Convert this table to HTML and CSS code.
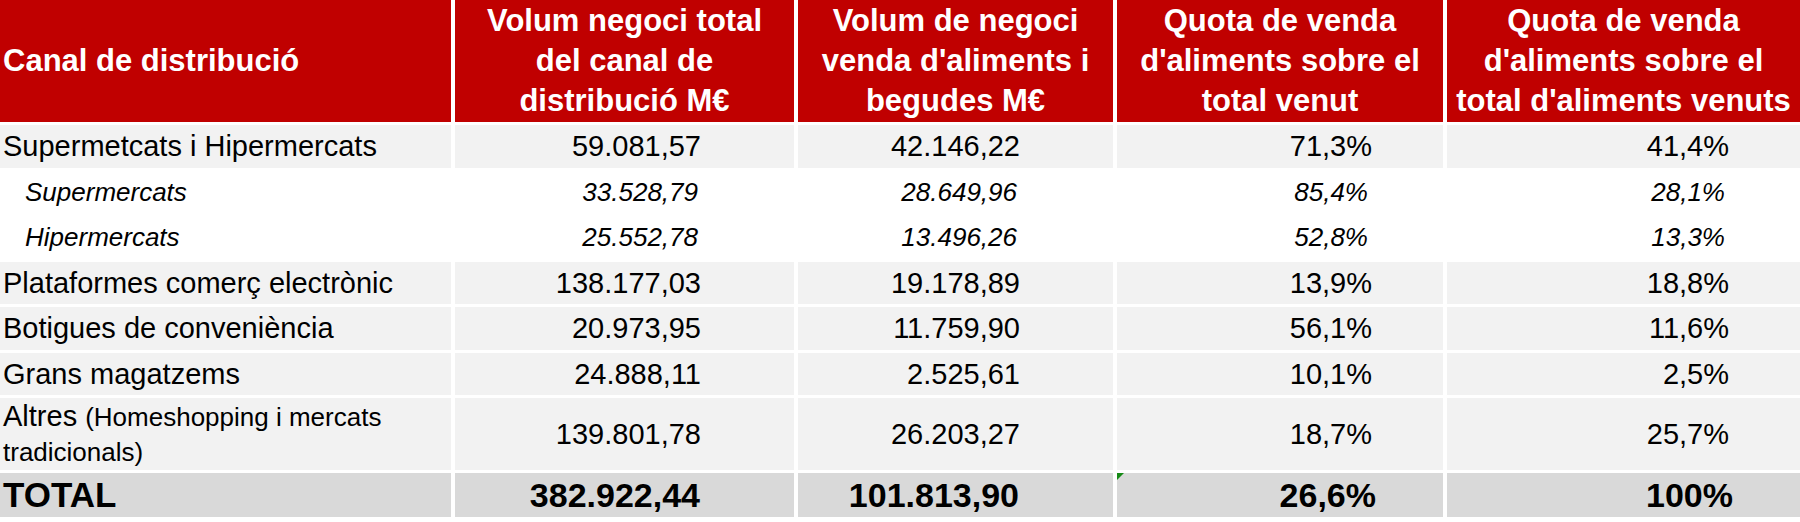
FILE: index.html
```html
<!DOCTYPE html>
<html lang="ca">
<head>
<meta charset="utf-8">
<title>Canal de distribució</title>
<link rel="stylesheet" href="styles.css">
</head>
<body>
<div class="sheet">
  <div class="row head">
    <div>Canal de distribució</div>
    <div>Volum negoci total<br>del canal de<br>distribució M€</div>
    <div>Volum de negoci<br>venda d'aliments i<br>begudes M€</div>
    <div>Quota de venda<br>d'aliments sobre el<br>total venut</div>
    <div>Quota de venda<br>d'aliments sobre el<br>total d'aliments venuts</div>
  </div>
  <div class="row band">
    <div>Supermetcats i Hipermercats</div>
    <div>59.081,57</div>
    <div>42.146,22</div>
    <div>71,3%</div>
    <div>41,4%</div>
  </div>
  <div class="row sub short">
    <div>Supermercats</div>
    <div>33.528,79</div>
    <div>28.649,96</div>
    <div>85,4%</div>
    <div>28,1%</div>
  </div>
  <div class="row sub">
    <div>Hipermercats</div>
    <div>25.552,78</div>
    <div>13.496,26</div>
    <div>52,8%</div>
    <div>13,3%</div>
  </div>
  <div class="row band short">
    <div>Plataformes comerç electrònic</div>
    <div>138.177,03</div>
    <div>19.178,89</div>
    <div>13,9%</div>
    <div>18,8%</div>
  </div>
  <div class="row band">
    <div>Botigues de conveniència</div>
    <div>20.973,95</div>
    <div>11.759,90</div>
    <div>56,1%</div>
    <div>11,6%</div>
  </div>
  <div class="row band short">
    <div>Grans magatzems</div>
    <div>24.888,11</div>
    <div>2.525,61</div>
    <div>10,1%</div>
    <div>2,5%</div>
  </div>
  <div class="row band tall">
    <div class="wrap">
      <p class="label">Altres <span class="note">(Homeshopping i mercats</span><br><span class="note">tradicionals)</span></p>
    </div>
    <div>139.801,78</div>
    <div>26.203,27</div>
    <div>18,7%</div>
    <div>25,7%</div>
  </div>
  <div class="row total">
    <div class="total-label">TOTAL</div>
    <div>382.922,44</div>
    <div>101.813,90</div>
    <div class="flag">26,6%</div>
    <div>100%</div>
  </div>
</div>
</body>
</html>
```

FILE: styles.css
```css
html, body {
  margin: 0;
  padding: 0;
  background: #ffffff;
}

body {
  font-family: "Liberation Sans", Arial, sans-serif;
  color: #000000;
}

.sheet {
  display: flex;
  flex-direction: column;
  gap: 3px;
  width: 1800px;
}

.row {
  display: grid;
  grid-template-columns: 451px 339px 315px 326px 353px;
  column-gap: 4px;
  height: 43px;
}

.row.short {
  height: 42px;
}

.row.tall {
  height: 72px;
}

.row > div {
  display: flex;
  align-items: center;
  justify-content: flex-end;
  font-size: 29px;
  white-space: nowrap;
  box-sizing: border-box;
}

.row > div:first-child {
  justify-content: flex-start;
  padding-left: 3px;
}

.row > div:nth-child(2),
.row > div:nth-child(3) {
  padding-right: 93px;
}

.row > div:nth-child(4),
.row > div:nth-child(5) {
  padding-right: 71px;
}

/* header */
.head {
  height: 122px;
}

.head > div {
  background: #c00000;
  color: #ffffff;
  font-weight: bold;
  font-size: 31px;
  line-height: 40px;
  text-align: center;
}

.head > div:nth-child(n) {
  justify-content: center;
  padding-right: 0;
}

.head > div:first-child {
  justify-content: flex-start;
  padding-left: 3px;
}

/* shaded rows */
.band > div {
  background: #f2f2f2;
}

/* sub rows */
.sub > div {
  font-style: italic;
  font-size: 26px;
}

.sub > div:first-child {
  padding-left: 25px;
}

.sub > div:nth-child(2),
.sub > div:nth-child(3) {
  padding-right: 96px;
}

.sub > div:nth-child(4),
.sub > div:nth-child(5) {
  padding-right: 75px;
}

/* wrapped label */
.label {
  margin: 0;
  line-height: 34px;
}

.note {
  font-size: 26px;
}

/* total row */
.total {
  height: 44px;
}

.total > div {
  background: #d9d9d9;
  font-weight: bold;
  font-size: 34px;
}

.total > div.total-label {
  font-size: 35px;
}

.total > div:nth-child(2),
.total > div:nth-child(3) {
  padding-right: 94px;
}

.total > div:nth-child(4),
.total > div:nth-child(5) {
  padding-right: 67px;
}

.flag {
  position: relative;
}

.flag::before {
  content: "";
  position: absolute;
  left: 0;
  top: 0;
  border-top: 7px solid #168a16;
  border-right: 7px solid transparent;
}
```
